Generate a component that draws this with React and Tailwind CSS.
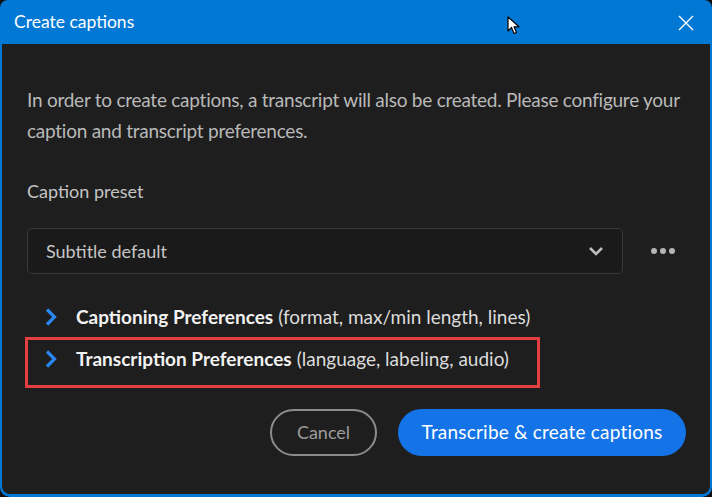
export default function App() {
  const font = { fontFamily: 'Lato, "Noto Sans", sans-serif' };
  return (
    <div className="w-[712px] h-[497px] bg-[#101010] overflow-hidden" style={font}>
      <div className="w-full h-full flex flex-col rounded-t-[8px] rounded-b-[10px] overflow-hidden bg-[#0078d4]">
        <div className="h-[44px] shrink-0 flex items-center pl-[14px] pr-[18px] text-white text-[17.5px] relative">
          <span className="flex-1">Create captions</span>
          <svg className="absolute left-[507px] top-[16px]" width="14" height="20" viewBox="0 0 14 20">
            <path d="M1 1 L1 15 L4.5 11.5 L7 17.5 L9.5 16.5 L7 10.8 L12 10.8 Z" fill="#fff" stroke="#000" strokeWidth="1.2" strokeLinejoin="round" />
          </svg>
          <svg width="16" height="16" viewBox="0 0 16 16" className="mt-[1px]">
            <path d="M1 1 L15 15 M15 1 L1 15" stroke="#fff" strokeWidth="1.4" />
          </svg>
        </div>
        <div className="flex-1 mx-[2px] mb-[3px] bg-[#1e1e1e] rounded-b-[8px] flex flex-col pl-[25px] pr-[20px] pt-[40px] relative">
          <p className="text-[19px] leading-[31px] text-[#b9b9b9] tracking-[-0.25px]">
            In order to create captions, a transcript will also be created. Please configure your caption and transcript preferences.
          </p>
          <div className="mt-[30px] text-[18px] leading-[31px] text-[#c4c4c4]">Caption preset</div>
          <div className="mt-[21px] flex items-center">
            <div className="w-[596px] h-[46px] rounded-[5px] border border-[#3a3a3a] bg-[#1a1a1a] flex items-center pl-[18px] pr-[18px] text-[18px] text-[#c6c6c6]">
              <span className="flex-1">Subtitle default</span>
              <svg width="16" height="12" viewBox="0 0 16 12">
                <path d="M2 3 L8 9 L14 3" fill="none" stroke="#bdbdbd" strokeWidth="2.6" />
              </svg>
            </div>
            <div className="ml-[28px] flex gap-[3px]">
              <span className="w-[6px] h-[6px] rounded-full bg-[#b5b5b5]" />
              <span className="w-[6px] h-[6px] rounded-full bg-[#b5b5b5]" />
              <span className="w-[6px] h-[6px] rounded-full bg-[#b5b5b5]" />
            </div>
          </div>
          <div className="mt-[22px] h-[42px] flex items-center text-[19px]">
            <svg width="14" height="20" viewBox="0 0 14 20" className="ml-[17px] mr-[18px]">
              <path d="M3 2.5 L10.5 10 L3 17.5" fill="none" stroke="#2a86f0" strokeWidth="3.2" />
            </svg>
            <span className="text-[#f2f2f2] font-bold">Captioning Preferences</span>
            <span className="text-[#dcdcdc] ml-[5px]">(format, max/min length, lines)</span>
          </div>
          <div className="h-[42px] flex items-center text-[19px] relative">
            <svg width="14" height="20" viewBox="0 0 14 20" className="ml-[17px] mr-[18px]">
              <path d="M3 2.5 L10.5 10 L3 17.5" fill="none" stroke="#2a86f0" strokeWidth="3.2" />
            </svg>
            <span className="text-[#f2f2f2] font-bold">Transcription Preferences</span>
            <span className="text-[#dcdcdc] ml-[5px]">(language, labeling, audio)</span>
            <div className="absolute left-[-2px] top-[-1px] w-[515px] h-[51px] border-[3px] border-[#e5403f]" />
          </div>
          <div className="mt-[29px] flex justify-end gap-[21px] pr-[4px]">
            <button className="w-[107px] h-[47px] rounded-full border-2 border-[#8c8c8c] text-[#9c9c9c] text-[18px]">Cancel</button>
            <button className="w-[288px] h-[47px] rounded-full bg-[#1473e6] text-white text-[19px] tracking-[0.2px]">Transcribe &amp; create captions</button>
          </div>
        </div>
      </div>
    </div>
  );
}
